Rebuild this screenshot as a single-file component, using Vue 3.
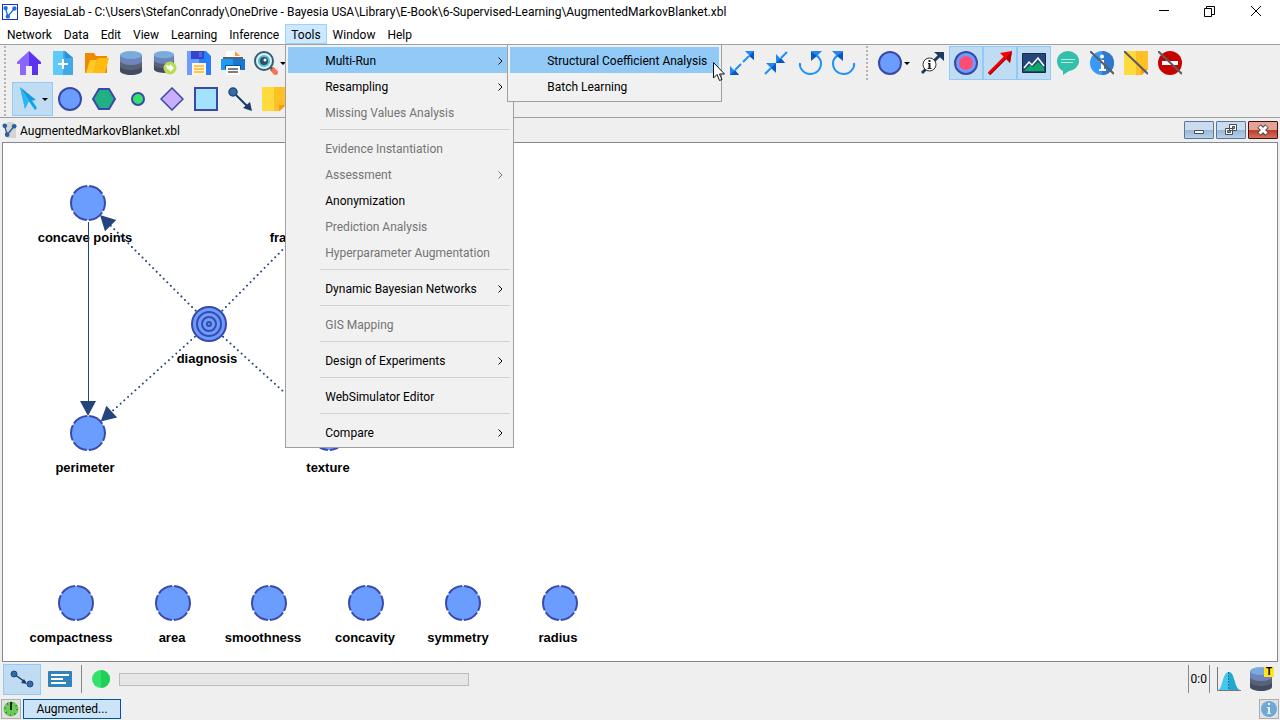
<script setup>
const menus = ['Network', 'Data', 'Edit', 'View', 'Learning', 'Inference', 'Tools', 'Window', 'Help']

const fileTools = [
  { icon: 'home', label: 'Home' },
  { icon: 'new', label: 'New network' },
  { icon: 'open', label: 'Open' },
  { icon: 'data', label: 'Data source' },
  { icon: 'data-import', label: 'Import data' },
  { icon: 'save', label: 'Save' },
  { icon: 'print', label: 'Print' },
  { icon: 'search', label: 'Zoom', drop: true },
]
const layoutTools = [
  { icon: 'expand', label: 'Stretch' },
  { icon: 'shrink', label: 'Shrink' },
  { icon: 'rotate-left', label: 'Rotate left' },
  { icon: 'rotate-right', label: 'Rotate right' },
]
const displayTools = [
  { icon: 'node', label: 'Node style', drop: true },
  { icon: 'arc-info', label: 'Arc information' },
  { icon: 'target', label: 'Node colors', on: true },
  { icon: 'red-arc', label: 'Arc colors', on: true },
  { icon: 'image', label: 'Images', on: true },
  { icon: 'comment', label: 'Comments' },
  { icon: 'info-off', label: 'Information' },
  { icon: 'note-off', label: 'Notes' },
  { icon: 'stop-off', label: 'Forbidden arcs' },
]
const drawTools = [
  { icon: 'pointer', label: 'Select', drop: true, on: true },
  { icon: 'node', label: 'Node' },
  { icon: 'hexagon', label: 'Constraint' },
  { icon: 'dot', label: 'Function node' },
  { icon: 'diamond', label: 'Utility' },
  { icon: 'square', label: 'Decision' },
  { icon: 'arc', label: 'Arc' },
  { icon: 'note', label: 'Note' },
]

const toolsMenu = [
  { text: 'Multi-Run', sub: true, active: true },
  { text: 'Resampling', sub: true },
  { text: 'Missing Values Analysis', off: true },
  null,
  { text: 'Evidence Instantiation', off: true },
  { text: 'Assessment', off: true, sub: true },
  { text: 'Anonymization' },
  { text: 'Prediction Analysis', off: true },
  { text: 'Hyperparameter Augmentation', off: true },
  null,
  { text: 'Dynamic Bayesian Networks', sub: true },
  null,
  { text: 'GIS Mapping', off: true },
  null,
  { text: 'Design of Experiments', sub: true },
  null,
  { text: 'WebSimulator Editor' },
  null,
  { text: 'Compare', sub: true },
]
const subMenu = [
  { text: 'Structural Coefficient Analysis', active: true },
  { text: 'Batch Learning' },
]

const nodes = [
  { name: 'concave points', x: 85, y: 60, tx: 82 },
  { name: 'fra', x: 326, y: 60, tx: 275 },
  { name: 'diagnosis', x: 206, y: 181, tx: 204, goal: true },
  { name: 'perimeter', x: 85, y: 290, tx: 82 },
  { name: 'texture', x: 326, y: 290, tx: 325 },
  { name: 'compactness', x: 73, y: 460, tx: 68 },
  { name: 'area', x: 170, y: 460, tx: 169 },
  { name: 'smoothness', x: 266, y: 460, tx: 260 },
  { name: 'concavity', x: 363, y: 460, tx: 362 },
  { name: 'symmetry', x: 460, y: 460, tx: 455 },
  { name: 'radius', x: 557, y: 460, tx: 555 },
]

function makeEdge(a, b, solid) {
  const dx = nodes[b].x - nodes[a].x
  const dy = nodes[b].y - nodes[a].y
  const len = Math.hypot(dx, dy)
  return {
    solid,
    move: `translate(${nodes[a].x} ${nodes[a].y}) rotate(${(Math.atan2(dy, dx) * 180) / Math.PI})`,
    tip: len - 17,
  }
}
const edges = [makeEdge(0, 3, true), makeEdge(2, 0), makeEdge(2, 1), makeEdge(2, 3), makeEdge(2, 4)]
</script>

<template>
  <div class="app">
    <svg class="defs" aria-hidden="true">
      <symbol id="i-home" viewBox="0 0 24 24">
        <path fill="#8a66ff" d="M12 0 0 11v2h3v11h6v-9h3z" />
        <path fill="#5a32f0" d="M12 0l12 11v2h-3v11h-6v-9h-3z" />
      </symbol>
      <symbol id="i-new" viewBox="0 0 24 24">
        <path fill="#5ec9fb" d="M2 0h12l8 7v17H2z" />
        <path fill="#43a8ea" d="M12 0h2l8 7v17H12z" />
        <path fill="#2f8fd8" d="M14 0l8 7h-8z" />
        <path stroke="#fff" stroke-width="2" d="M12 8v10M7 13h10" />
      </symbol>
      <symbol id="i-open" viewBox="0 0 24 24">
        <path fill="#ef8a00" d="M0 2h9l2 3h11v17H0z" />
        <path fill="#ffca28" d="M5 9h7v13H1z" />
        <path fill="#ffbb10" d="M11 9l3-2h10l-4 15H8z" />
      </symbol>
      <symbol id="i-data" viewBox="0 0 24 24">
        <path fill="#434b61" d="M1 14v6c0 2 5 4 11 4s11-2 11-4v-6z" />
        <path fill="#586276" d="M1 9v6c0 2 5 4 11 4s11-2 11-4V9z" />
        <path fill="#6f83bc" d="M1 4v6c0 2 5 4 11 4s11-2 11-4V4z" />
        <ellipse cx="12" cy="4" rx="11" ry="4" fill="#7aabdd" />
      </symbol>
      <symbol id="i-data-import" viewBox="0 0 24 24">
        <use href="#i-data" x="0" y="0" width="22" height="22" />
        <circle cx="17" cy="17" r="6.5" fill="#b9dc53" />
        <path fill="#fff" d="M13 14l4 1v-2l4 4-4 4v-2c-2 0-4-2-4-5z" />
      </symbol>
      <symbol id="i-save" viewBox="0 0 24 24">
        <path fill="#6b9dff" d="M0 0h12v24H0z" />
        <path fill="#2a7ffc" d="M12 0h7l5 5v19H12z" />
        <path fill="#3445c8" d="M4 0h13v8H4z" />
        <path fill="#5a64e0" d="M12 1h3v5h-3z" />
        <path fill="#fff4de" d="M5 12h14v12H5z" />
        <path stroke="#ffb72b" stroke-width="1.5" d="M7 15h10M7 18h10M7 21h10" />
      </symbol>
      <symbol id="i-print" viewBox="0 0 24 24">
        <path fill="#fff" d="M5 0h10l4 5v6H5z" />
        <path fill="#ff9a2e" d="M14 0l5 5h-5z" />
        <path fill="#5c6470" d="M2 6h20v4H2z" />
        <path fill="#1e9cf0" d="M0 8h24v11H0z" />
        <path fill="#1976d2" d="M12 8h12v11H12z" />
        <path fill="#0f4fa0" d="M4 14h16v4H4z" />
        <path fill="#fff" d="M5 15h14v9H5z" />
        <path stroke="#555" stroke-width="1.5" d="M7 18h10M7 21h10" />
      </symbol>
      <symbol id="i-search" viewBox="0 0 24 24">
        <path stroke="#ff7058" stroke-width="5" stroke-linecap="round" d="M18.500 18.500l3 3" />
        <path stroke="#335e71" stroke-width="2" d="M15 15l3 3" />
        <circle cx="10" cy="10" r="9" fill="#dff2f8" stroke="#335e71" stroke-width="2" />
        <circle cx="10" cy="10" r="5" fill="#2f5166" stroke="#55bdd8" stroke-width="2" />
        <circle cx="11" cy="9" r="1.500" fill="#fff" />
      </symbol>
      <symbol id="i-expand" viewBox="0 0 24 24">
        <path stroke="#1e90ff" stroke-width="2" d="M11 13l-6 6M13 11l6-6" />
        <path fill="#1e88f8" d="M15 0h9v9zM0 15v9h9z" />
        <path fill="#0a57c2" d="M24 0v9l-5-4zM0 24h9l-4-5z" />
      </symbol>
      <symbol id="i-shrink" viewBox="0 0 24 24">
        <path stroke="#1e90ff" stroke-width="2" d="M1 23l6-6M23 1l-6 6" />
        <path fill="#1e88f8" d="M2 12h10v10zM12 3v9h9z" />
        <path fill="#0a57c2" d="M12 12v9l-5-4zM12 12h9l-4-5z" />
      </symbol>
      <symbol id="i-rotate-left" viewBox="0 0 24 24">
        <path fill="none" stroke="#1e90ff" stroke-width="2" d="M2 12c-1 5 4 11 10 11s11-4 11-11c0-4-3-7-7-9" />
        <path fill="#2188f2" d="M13 0h11l-5 5z" />
        <path fill="#0a57c2" d="M13 0v10l6-5z" />
      </symbol>
      <symbol id="i-rotate-right" viewBox="0 0 24 24">
        <path fill="none" stroke="#1e90ff" stroke-width="2" d="M22 12c1 5-4 11-10 11S1 19 1 12c0-4 3-7 7-9" />
        <path fill="#2188f2" d="M11 0H0l5 5z" />
        <path fill="#0a57c2" d="M11 0v10L5 5z" />
      </symbol>
      <symbol id="i-node" viewBox="0 0 24 24">
        <circle cx="12" cy="12" r="11" fill="#6b9dff" stroke="#3949a6" stroke-width="2" />
      </symbol>
      <symbol id="i-arc-info" viewBox="0 0 24 24">
        <path stroke="#1a3c61" stroke-width="3" d="M2 22L20 4" />
        <path fill="#1a3c61" d="M14 1h10v9z" />
        <circle cx="9.500" cy="13.500" r="6.500" fill="#fff" stroke="#333" />
        <path stroke="#222" stroke-width="2" d="M9.500 9v2M9.500 12v5" />
        <path stroke="#222" d="M8 12.500h2M7.500 17.500h4" />
      </symbol>
      <symbol id="i-target" viewBox="0 0 24 24">
        <circle cx="12" cy="12" r="11" fill="#6b9dff" stroke="#3949a6" stroke-width="2" />
        <circle cx="12" cy="12" r="7" fill="#ff4c72" />
      </symbol>
      <symbol id="i-red-arc" viewBox="0 0 24 24">
        <path stroke="#a80000" stroke-width="3.500" d="M1 23L18 6" />
        <path stroke="#f00" stroke-width="2" d="M1 22L18 5" />
        <path fill="#f00" d="M12 2l12-2-2 12z" />
        <path fill="#b00000" d="M24 0l-2 12-4-5z" />
      </symbol>
      <symbol id="i-image" viewBox="0 0 24 24">
        <path fill="#25467d" stroke="#162b46" d="M.5 2.500h23v19H.5z" />
        <path fill="#0da765" d="M2 20l6-6 3 2 5-5 6 6v3z" />
        <path fill="none" stroke="#fff" stroke-width="1.500" d="M2 17l5-6 3 3 6-7 6 8" />
      </symbol>
      <symbol id="i-comment" viewBox="0 0 24 24">
        <path fill="#33bfaa" d="M12 0a11 10 0 0 1 11 10c0 5-4 9-10 10l-6 4v-4C3 18 1 14 1 10A11 10 0 0 1 12 0z" />
        <path stroke="#b8efe4" d="M5 8.500h14M5 11.500h12" />
      </symbol>
      <symbol id="i-info" viewBox="0 0 24 24">
        <circle cx="12" cy="12" r="12" fill="#3899fa" />
        <path fill="#2f78cc" d="M12 0a12 12 0 0 1 0 24z" />
        <circle cx="12" cy="5.500" r="2" fill="#fff" />
        <path fill="#fff" d="M9 9h5v9h2v2H9v-2h2v-7H9z" />
      </symbol>
      <symbol id="i-info-off" viewBox="0 0 24 24">
        <use href="#i-info" width="24" height="24" />
        <path stroke="#5c5c5c" stroke-width="2" d="M0 0l24 23" />
      </symbol>
      <symbol id="i-note" viewBox="0 0 24 24">
        <path fill="#ffda3d" d="M0 0h13v24H0z" />
        <path fill="#ffc025" d="M12 0h12v18l-6 6h-6z" />
        <path fill="#ff951e" d="M17 18h7l-7 6z" />
      </symbol>
      <symbol id="i-note-off" viewBox="0 0 24 24">
        <use href="#i-note" width="24" height="24" />
        <path stroke="#5c5c5c" stroke-width="2" d="M0 0l24 23" />
      </symbol>
      <symbol id="i-stop-off" viewBox="0 0 24 24">
        <circle cx="12" cy="12" r="12" fill="#c90000" />
        <path fill="#fff" d="M4 10h16v4H4z" />
        <path stroke="#5c5c5c" stroke-width="2" d="M0 0l24 23" />
      </symbol>
      <symbol id="i-pointer" viewBox="0 0 24 24">
        <path fill="#29b6f6" d="M4 0l5 22 3-8z" />
        <path fill="#1398dc" d="M4 0l16 13-7 1z" />
        <path fill="#0aa5e8" d="M12 13l3-1 6 9-2 2z" />
        <path fill="#29b6f6" d="M4 0l9 14-4 8z" />
      </symbol>
      <symbol id="i-hexagon" viewBox="0 0 24 24">
        <path fill="#1fb084" stroke="#3949a6" stroke-width="2" d="M7 2h10l6 10-6 10H7L1 12z" />
      </symbol>
      <symbol id="i-dot" viewBox="0 0 24 24">
        <circle cx="12" cy="12" r="6" fill="#35e06c" stroke="#3949a6" stroke-width="2" />
      </symbol>
      <symbol id="i-diamond" viewBox="0 0 24 24">
        <path fill="#c9adff" stroke="#3949a6" stroke-width="1.500" d="M12 1l11 11-11 11L1 12z" />
      </symbol>
      <symbol id="i-square" viewBox="0 0 24 24">
        <path fill="#a3e2fc" stroke="#3949a6" stroke-width="2" d="M1 1h22v22H1z" />
      </symbol>
      <symbol id="i-arc" viewBox="0 0 24 24">
        <path stroke="#1a3c61" stroke-width="2" d="M5 5l15 15" />
        <path fill="#1a3c61" d="M24 24l-9-3 7-6z" />
        <circle cx="5" cy="5" r="4" fill="#316f9e" stroke="#25467d" stroke-width="1.500" />
      </symbol>
      <symbol id="i-logo" viewBox="0 0 16 16">
        <path fill="none" stroke="currentColor" stroke-width="1.500" d="M3 4l2.500 9L13 4" />
        <g fill="currentColor">
          <circle cx="3" cy="3.500" r="2.500" />
          <circle cx="5.500" cy="13" r="2.500" />
          <circle cx="13" cy="4" r="2.500" />
        </g>
      </symbol>
    </svg>

    <header class="titlebar">
      <svg class="logo" aria-hidden="true"><use href="#i-logo" /></svg>
      <h1>BayesiaLab - C:\Users\StefanConrady\OneDrive - Bayesia USA\Library\E-Book\6-Supervised-Learning\AugmentedMarkovBlanket.xbl</h1>
      <button class="win" aria-label="Minimize"><svg viewBox="0 0 11 11"><path d="M1 4.500h10" /></svg></button>
      <button class="win" aria-label="Restore"><svg viewBox="0 0 11 11"><path d="M.5 2.500h7v8h-7zM2.500 2.500v-2h8v8h-3" /></svg></button>
      <button class="win" aria-label="Close"><svg viewBox="0 0 11 11"><path d="M0 0l10 10M10 0L0 10" /></svg></button>
    </header>

    <nav class="menubar" aria-label="Main menu">
      <div v-for="m in menus" :key="m" class="entry">
        <button :class="{ open: m === 'Tools' }">{{ m }}</button>
        <div v-if="m === 'Tools'" class="menu main-menu">
          <template v-for="(item, i) in toolsMenu" :key="i">
            <hr v-if="!item" />
            <button v-else :class="{ active: item.active }" :disabled="item.off">
              {{ item.text }}
              <svg v-if="item.sub" viewBox="0 0 5 8" aria-hidden="true"><path d="M.5.5L4 4 .5 7.500" /></svg>
            </button>
          </template>
          <div class="menu sub-menu">
            <button v-for="s in subMenu" :key="s.text" :class="{ active: s.active }">{{ s.text }}</button>
            <svg class="cursor" viewBox="0 0 12 19" aria-hidden="true">
              <path fill="#fff" stroke="#111" d="M.5.5v15.500l3.500-3.500 2.500 6 2.500-1-2.500-5.500h5z" />
            </svg>
          </div>
        </div>
      </div>
    </nav>

    <div class="toolbars">
      <div class="grip tall"></div>
      <div class="rows">
        <div class="row">
          <div class="group files">
            <button v-for="t in fileTools" :key="t.label" class="tool" :class="{ drop: t.drop }" :aria-label="t.label">
              <svg class="icon"><use :href="'#i-' + t.icon" /></svg>
            </button>
          </div>
          <div class="group">
            <button v-for="t in layoutTools" :key="t.label" class="tool" :aria-label="t.label">
              <svg class="icon"><use :href="'#i-' + t.icon" /></svg>
            </button>
          </div>
          <div class="grip"></div>
          <div class="group">
            <button v-for="t in displayTools" :key="t.label" class="tool" :class="{ drop: t.drop, on: t.on }" :aria-label="t.label">
              <svg class="icon"><use :href="'#i-' + t.icon" /></svg>
            </button>
          </div>
        </div>
        <div class="row">
          <button v-for="t in drawTools" :key="t.label" class="tool" :class="{ drop: t.drop, on: t.on }" :aria-label="t.label">
            <svg class="icon"><use :href="'#i-' + t.icon" /></svg>
          </button>
        </div>
      </div>
    </div>

    <main class="document">
      <div class="doc-title">
        <svg class="doc-logo" viewBox="0 0 16 16" aria-hidden="true">
          <path fill="#d4d4d4" d="M5 0h6l3 3v13H5z" />
          <use href="#i-logo" width="15" height="16" />
        </svg>
        <h2>AugmentedMarkovBlanket.xbl</h2>
        <button class="frame" aria-label="Minimize document">
          <svg viewBox="0 0 14 12"><path fill="#fff" stroke="#464c58" d="M2.500 6.500h9v3h-9z" /></svg>
        </button>
        <button class="frame" aria-label="Restore document">
          <svg viewBox="0 0 14 12"><path fill="#fff" stroke="#464c58" d="M5.500.5h7v6h-7zM1.500 4.500h7v6h-7z" /><path fill="#7f9dbf" stroke="#464c58" d="M3.500 6.500h3v2h-3zM8.500 2.500h2v2h-2z" /></svg>
        </button>
        <button class="frame close" aria-label="Close document">
          <svg viewBox="0 0 14 12"><path stroke="#56454a" stroke-width="5" d="M3 2l8 8M11 2l-8 8" /><path stroke="#fff" stroke-width="3" d="M3.500 2.500l7 7M10.500 2.500l-7 7" /></svg>
        </button>
      </div>
      <div class="canvas">
        <svg class="graph" role="img" aria-label="Bayesian network">
          <text v-for="n in nodes" :key="n.name" :x="n.tx" :y="n.y + 39">{{ n.name }}</text>
          <g v-for="(e, i) in edges" :key="i" :transform="e.move">
            <line :class="e.solid ? 'solid' : 'dotted'" x1="19" :x2="e.tip - 12" y1="0" y2="0" />
            <path class="head" :transform="`translate(${e.tip} 0)`" d="M0 0l-15-8v16z" />
          </g>
          <g v-for="n in nodes" :key="n.name" :transform="`translate(${n.x} ${n.y})`" class="node">
            <template v-if="n.goal">
              <circle r="17" />
              <circle r="12" />
              <circle r="7" />
              <circle r="2" />
            </template>
            <circle v-else r="17" pathLength="360" stroke-dasharray="53 7" stroke-dashoffset="26" />
          </g>
        </svg>
      </div>
    </main>

    <footer>
      <div class="status">
        <button class="mode on" aria-label="Modeling mode">
          <svg viewBox="0 0 24 18"><path stroke="#1a3c61" stroke-width="1.500" d="M4 4l11 8" /><path fill="#1a3c61" d="M17 14l-6-1 3-4z" /><circle cx="4" cy="4" r="3" fill="#31709e" stroke="#25408f" /><circle cx="20" cy="14" r="3" fill="#31709e" stroke="#25408f" /></svg>
        </button>
        <button class="mode" aria-label="Validation mode">
          <svg viewBox="0 0 24 18"><rect y="1" width="24" height="16" rx="1" fill="#3182bd" /><path stroke="#fff" stroke-width="2" d="M3 5h18M3 9h12M3 13h15" /></svg>
        </button>
        <span class="line"></span>
        <svg class="light" viewBox="0 0 18 18" aria-hidden="true"><circle cx="9" cy="9" r="9" fill="#35e06c" /><path fill="#1fcf56" d="M9 0a9 9 0 0 1 0 18z" /></svg>
        <progress value="0" max="100" aria-label="Progress"></progress>
        <span class="space"></span>
        <span class="count">0:0</span>
        <svg class="icon bell" viewBox="0 0 24 24" aria-hidden="true">
          <path fill="#44c8f0" d="M1 23c5-1 4-18 11-18v18z" />
          <path fill="#1fa9cf" d="M12 5c6 0 5 16 11 18H12z" />
          <path stroke="#2a6f86" stroke-dasharray="2 1" d="M11.500 5v18" />
          <path fill="none" stroke="#777" d="M.5 0v23.500H24" />
        </svg>
        <svg class="icon" viewBox="0 0 24 24" aria-hidden="true"><use href="#i-data" width="24" height="24" /></svg>
        <b class="tag">T</b>
      </div>
      <div class="tasks">
        <button class="small" aria-label="Timer">
          <svg viewBox="0 0 16 16"><circle cx="8" cy="8" r="7.500" fill="#6acb57" /><circle cx="8" cy="8" r="6" fill="none" stroke="#2f5e2a" stroke-width="1.500" stroke-dasharray="1 3.700" /><path stroke="#222" stroke-width="2" d="M8 1v8" /></svg>
        </button>
        <button class="task">Augmented...</button>
        <span class="space"></span>
        <button class="small" aria-label="Information">
          <svg viewBox="0 0 16 16"><circle cx="8" cy="8" r="8" fill="#70a9d6" /><path fill="#e8eef4" d="M7 2h2v2H7zM6 6h3v6h1v1H6v-1h1V7H6z" /></svg>
        </button>
      </div>
    </footer>
  </div>
</template>

<style>
html,
body {
  background: #efefef;
}
</style>

<style scoped>
.app {
  min-height: 100vh;
  display: flex;
  flex-direction: column;
  background: #efefef;
  color: #000;
  font: 12px/16px Roboto, "Open Sans", sans-serif;
}
.app *,
.app {
  box-sizing: border-box;
}
.defs {
  position: absolute;
  width: 0;
  height: 0;
}
button {
  margin: 0;
  padding: 0;
  border: 0;
  background: none;
  color: inherit;
  font: inherit;
}
h1,
h2 {
  margin: 0;
  font: inherit;
}
h1 {
  flex: 1;
  min-width: 0;
  overflow: hidden;
  white-space: nowrap;
}
.titlebar {
  display: flex;
  align-items: center;
  height: 23px;
  padding-left: 2px;
  background: #fff;
}
.logo {
  width: 16px;
  height: 16px;
  margin-right: 6px;
  border: 1px solid #1433d6;
  color: #1e6fe0;
}
.win {
  width: 46px;
  height: 20px;
  display: grid;
  place-items: center;
}
.win svg {
  width: 11px;
  height: 11px;
  fill: none;
  stroke: #000;
}
.win:last-child {
  width: 48px;
}
.menubar {
  display: flex;
  height: 22px;
  padding: 1px 0 0 1px;
  border-bottom: 1px solid #a0a0a0;
  background: #fff;
}
.entry {
  position: relative;
}
.entry > button {
  height: 20px;
  padding: 0 5px;
  border: 1px solid transparent;
  line-height: 20px;
}
.entry > .open {
  border-color: #99d1ff;
  background: #cce8ff;
}
.menu {
  position: absolute;
  z-index: 2;
  padding: 2px;
  border: 1px solid #a0a0a0;
  background: #f1f1f1;
}
.main-menu {
  top: 20px;
  left: 0;
  width: 229px;
}
.sub-menu {
  top: -1px;
  left: 221px;
  width: 215px;
}
.menu button {
  display: flex;
  align-items: center;
  justify-content: space-between;
  width: 100%;
  height: 26px;
  padding: 1px 8px 0 37px;
  white-space: nowrap;
}
.sub-menu button {
  padding-right: 0;
}
.menu button:disabled {
  color: #747474;
}
.menu .active {
  background: #91c9f7;
}
.menu button svg {
  width: 5px;
  height: 8px;
  fill: none;
  stroke: currentColor;
}
.menu hr {
  height: 1px;
  margin: 4px 1px 5px 32px;
  border: 0;
  background: #d2d2d2;
}
.menu .cursor {
  position: absolute;
  top: 17px;
  left: 205px;
  width: 12px;
  height: 19px;
}
.toolbars {
  display: flex;
  gap: 6px;
  padding: 1px 0 1px 4px;
  border-bottom: 1px solid #a0a0a0;
}
.grip {
  width: 2px;
  height: 34px;
  background: repeating-linear-gradient(#b4b4b4 0 2px, #efefef 2px 4px);
}
.grip.tall {
  height: 70px;
}
.rows {
  display: flex;
  flex-direction: column;
  gap: 2px;
}
.row,
.group {
  display: flex;
}
.files {
  width: 713px;
}
.row .group + .grip {
  margin: 0 6px 0 5px;
}
.tool {
  display: flex;
  align-items: center;
  width: 34px;
  height: 34px;
  padding: 0 4px;
  border: 1px solid transparent;
}
.drop {
  width: 41px;
  padding-left: 3px;
}
.drop::after {
  content: "";
  margin-left: 2px;
  border: 3px solid transparent;
  border-top-color: #000;
  border-bottom: 0;
}
.on {
  border-color: #91c9f7;
  background: #c0dcf3;
}
.icon {
  flex: none;
  width: 24px;
  height: 24px;
}
.document {
  flex: 1;
  display: flex;
  flex-direction: column;
  padding: 0 2px;
}
.doc-title {
  display: flex;
  align-items: center;
  gap: 2px;
  height: 24px;
}
.doc-title h2 {
  flex: 1;
  padding-top: 1px;
}
.doc-logo {
  width: 16px;
  height: 16px;
  color: #2c5f9e;
}
.frame {
  display: grid;
  place-items: center;
  width: 30px;
  height: 18px;
  border: 1px solid #5d7896;
  border-radius: 1px;
  background: linear-gradient(#c9dcf0 0 50%, #98b6d3 50%, #b7d0ea);
}
.frame svg {
  width: 14px;
  height: 12px;
}
.frame.close {
  border-color: #4a0d17;
  background: linear-gradient(#e4a394 0 50%, #ba3a27 50%, #d5705b);
}
.canvas {
  flex: 1;
  display: flex;
  min-height: 520px;
  border: 1px solid #828790;
  background: #fff;
}
.graph {
  flex: 1;
  width: 100%;
}
.graph text {
  font: bold 13px "Liberation Sans", Arial, sans-serif;
  text-anchor: middle;
}
.solid,
.dotted {
  stroke: #25467d;
}
.solid {
  shape-rendering: crispEdges;
}
.dotted {
  stroke-width: 2;
  stroke-linecap: round;
  stroke-dasharray: 0 5;
}
.head {
  fill: #25467d;
}
.node {
  fill: #6b9dff;
  stroke: #394aab;
  stroke-width: 2;
}
.status {
  position: relative;
  display: flex;
  align-items: center;
  height: 34px;
  padding: 0 7px 0 3px;
}
.mode {
  display: grid;
  place-items: center;
  width: 38px;
  height: 31px;
  border: 1px solid transparent;
}
.mode.on {
  border-color: #91c9f7;
}
.mode svg {
  width: 24px;
  height: 18px;
}
.line {
  width: 1px;
  height: 28px;
  margin: 0 10px 0 2px;
  background: #888;
}
.light {
  width: 18px;
  height: 18px;
  margin-right: 9px;
}
progress {
  appearance: none;
  width: 350px;
  height: 13px;
  border: 1px solid #bcbcbc;
  background: #e6e6e6;
}
progress::-webkit-progress-bar {
  background: #e6e6e6;
}
.space {
  flex: 1;
}
.count {
  padding: 0 2px;
  border: 1px solid #888;
  border-width: 0 1px;
  line-height: 28px;
}
.bell {
  margin: 0 8px 0 7px;
}
.tag {
  position: absolute;
  top: 5px;
  right: 6px;
  width: 10px;
  height: 10px;
  background: #ffe51f;
  font: bold 10px/10px "Liberation Sans", sans-serif;
  text-align: center;
}
.tasks {
  display: flex;
  align-items: center;
  gap: 2px;
  height: 24px;
  padding: 2px 1px 0;
}
.small {
  display: grid;
  place-items: center;
  width: 20px;
  height: 20px;
  border: 1px solid #adadad;
  background: #e1e1e1;
}
.small svg {
  width: 16px;
  height: 16px;
}
.task {
  width: 98px;
  height: 20px;
  border: 1px solid #0054a0;
  background: #cce4f7;
}
</style>
